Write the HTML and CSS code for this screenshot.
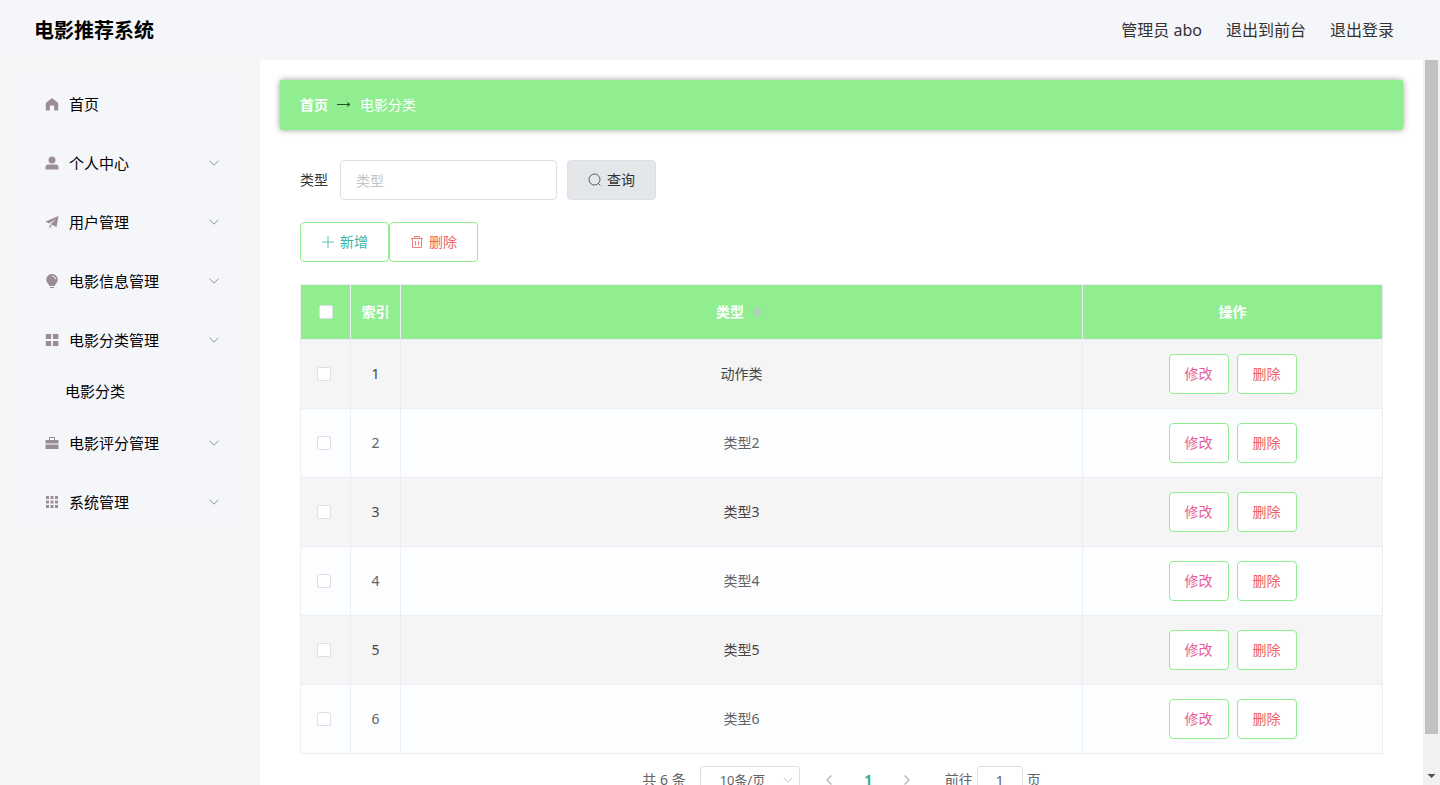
FILE: index.html
```
<!DOCTYPE html>
<html lang="zh-CN">
<head>
<meta charset="utf-8">
<title>电影推荐系统</title>
<link rel="stylesheet" href="styles.css">
</head>
<body>
<svg class="defs" aria-hidden="true">
  <symbol id="down" viewBox="0 0 12 12"><path d="M1.500 3.700 6 8.200l4.500-4.500" fill="none" stroke="currentColor"/></symbol>
  <symbol id="left" viewBox="0 0 12 12"><path d="M8.500 1.500 4 6l4.500 4.500" fill="none" stroke="currentColor" stroke-width="1.400"/></symbol>
  <symbol id="right" viewBox="0 0 12 12"><path d="M3.500 1.500 8 6l-4.500 4.500" fill="none" stroke="currentColor" stroke-width="1.400"/></symbol>
</svg>
<header class="header">
  <h1 class="title">电影推荐系统</h1>
  <nav class="user-nav">
    <span>管理员 abo</span>
    <a href="#">退出到前台</a>
    <a href="#">退出登录</a>
  </nav>
</header>
<div class="body">
  <aside class="sidebar">
    <nav class="menu">
      <a class="item home" href="#"><svg class="icon" viewBox="0 0 14 14"><path d="M7 1 .800 6v7.500h4V9.500q0-1 1-1h2.400q1 0 1 1v4h4V6z"/></svg><span>首页</span></a>
      <button class="item"><svg class="icon" viewBox="0 0 14 14"><circle cx="7" cy="4" r="3.500"/><path d="M.5 13.500v-2q0-3 3-3h7q3 0 3 3v2z"/></svg><span>个人中心</span><svg class="arrow"><use href="#down"/></svg></button>
      <button class="item"><svg class="icon" viewBox="0 0 14 14"><path d="M13.500 1 .5 6.500l3.500 2L11 4 5.500 9.300 11.500 12zM4.500 9.800v3.700l2.300-2.400z"/></svg><span>用户管理</span><svg class="arrow"><use href="#down"/></svg></button>
      <button class="item"><svg class="icon" viewBox="0 0 14 14"><path d="M7 0a5.700 5.700 0 0 0-3.500 10.200L4.500 12h5l1-1.800A5.700 5.700 0 0 0 7 0zM5 13h4v1H5z"/><path d="M7.500 2.200q2.800.4 3.200 3" fill="none" stroke="#f4f6fa"/></svg><span>电影信息管理</span><svg class="arrow"><use href="#down"/></svg></button>
      <button class="item"><svg class="icon" viewBox="0 0 14 14"><path d="M.8 1h5.400v5H.8zM8 1h5.400v5H8zM.8 8h5.400v5H.8zM8 8h5.400v5H8z"/></svg><span>电影分类管理</span><svg class="arrow"><use href="#down"/></svg></button>
      <a class="item sub" href="#">电影分类</a>
      <button class="item"><svg class="icon" viewBox="0 0 14 14"><path d="M4 4V1h6v3h3.500v3.500H.500V4zm1 0h4V2H5zM.500 8.500h13V13H.500z"/></svg><span>电影评分管理</span><svg class="arrow"><use href="#down"/></svg></button>
      <button class="item"><svg class="icon" viewBox="0 0 14 14"><path d="M1 1h3v3H1zM5.500 1h3v3h-3zM10 1h3v3h-3zM1 5.500h3v3H1zM5.500 5.500h3v3h-3zM10 5.500h3v3h-3zM1 10h3v3H1zM5.500 10h3v3h-3zM10 10h3v3h-3z"/></svg><span>系统管理</span><svg class="arrow"><use href="#down"/></svg></button>
    </nav>
  </aside>
  <main class="main">
    <nav class="crumbs">
      <a class="crumb-home" href="#">首页</a>
      <svg class="crumb-arrow" viewBox="0 0 14 14"><path d="M0 6.500h13M10 4.500 13 6.500 10 8.500" fill="none" stroke="#25512f"/></svg>
      <span>电影分类</span>
    </nav>
    <div class="content">
      <form class="search">
        <label for="kind">类型</label>
        <input class="text-input" id="kind" type="text" placeholder="类型">
        <button class="btn query" type="button"><svg class="btn-icon" viewBox="0 0 14 14"><circle cx="6.500" cy="6.500" r="5.500"/><path d="m10.500 10.500 2 2"/></svg>查询</button>
      </form>
      <div class="actions">
        <button class="btn add"><svg class="btn-icon" viewBox="0 0 14 14"><path d="M7 1v12M1 7h12"/></svg>新增</button>
        <button class="btn remove"><svg class="btn-icon" viewBox="0 0 14 14"><path d="M1 3.500h12M4.500 3V1.500h5V3M2.500 3.500v9h9v-9M5.500 6v4.500M8.500 6v4.500"/></svg>删除</button>
      </div>
      <table class="table">
        <colgroup><col class="c-check"><col class="c-index"><col><col class="c-ops"></colgroup>
        <thead>
          <tr><th><input class="check" type="checkbox" aria-label="全选"></th><th>索引</th><th><span class="sortable">类型<svg class="sort" viewBox="0 0 16 14"><path d="M2 6 6 2l4 4zM2 8h8l-4 4z"/><path d="M0 7h15" fill="none" stroke="#c0c4cc" stroke-opacity=".5"/></svg></span></th><th>操作</th></tr>
        </thead>
        <tbody>
          <tr><td><input class="check" type="checkbox" aria-label="选择 1"></td><td>1</td><td>动作类</td><td><div class="ops"><button class="btn edit">修改</button><button class="btn remove">删除</button></div></td></tr>
          <tr><td><input class="check" type="checkbox" aria-label="选择 2"></td><td>2</td><td>类型2</td><td><div class="ops"><button class="btn edit">修改</button><button class="btn remove">删除</button></div></td></tr>
          <tr><td><input class="check" type="checkbox" aria-label="选择 3"></td><td>3</td><td>类型3</td><td><div class="ops"><button class="btn edit">修改</button><button class="btn remove">删除</button></div></td></tr>
          <tr><td><input class="check" type="checkbox" aria-label="选择 4"></td><td>4</td><td>类型4</td><td><div class="ops"><button class="btn edit">修改</button><button class="btn remove">删除</button></div></td></tr>
          <tr><td><input class="check" type="checkbox" aria-label="选择 5"></td><td>5</td><td>类型5</td><td><div class="ops"><button class="btn edit">修改</button><button class="btn remove">删除</button></div></td></tr>
          <tr><td><input class="check" type="checkbox" aria-label="选择 6"></td><td>6</td><td>类型6</td><td><div class="ops"><button class="btn edit">修改</button><button class="btn remove">删除</button></div></td></tr>
        </tbody>
      </table>
      <div class="pager">
        <span>共 6 条</span>
        <span class="size"><select class="size-select" aria-label="每页条数"><option>10条/页</option></select><svg class="size-arrow"><use href="#down"/></svg></span>
        <div class="pages">
          <button class="page" aria-label="上一页"><svg class="page-icon"><use href="#left"/></svg></button>
          <button class="page current">1</button>
          <button class="page" aria-label="下一页"><svg class="page-icon"><use href="#right"/></svg></button>
        </div>
        <label class="jump">前往<input class="jump-input" type="text" value="1">页</label>
      </div>
    </div>
  </main>
  <div class="scrollbar" aria-hidden="true">
    <div class="thumb"></div>
    <svg class="scroll-down" viewBox="0 0 17 17"><path d="M4.500 6h8l-4 4z"/></svg>
  </div>
</div>
</body>
</html>
```
FILE: styles.css
```
* { box-sizing: border-box; }
body {
  margin: 0;
  height: 100vh;
  display: flex;
  flex-direction: column;
  overflow: hidden;
  background: #fff;
  color: #333;
  font: 14px/20px "Noto Sans", "Noto Sans CJK SC", sans-serif;
}
a { color: inherit; text-decoration: none; }
button, input, select { font: inherit; color: inherit; margin: 0; }
button { cursor: pointer; }
.defs { display: none; }

.header {
  flex: none;
  height: 60px;
  display: flex;
  align-items: center;
  justify-content: space-between;
  padding: 0 46px 0 34px;
  background: #f4f6fa;
}
.title { margin: 0; padding-top: 2px; font-size: 20px; line-height: 28px; color: #000; }
.user-nav { display: flex; gap: 24px; font-size: 16px; line-height: 24px; }

.body { flex: 1; min-height: 0; display: flex; }
.sidebar { flex: none; width: 260px; padding: 12px 20px; background: #f5f5f5; }
.menu {
  display: flex;
  flex-direction: column;
  padding: 2px 0 1px;
  margin-right: 7px;
  background: #f4f6fa;
}
.item {
  display: flex;
  align-items: center;
  gap: 10px;
  height: 59px;
  padding: 0 13px 0 25px;
  border: 0;
  background: #f4f6fa;
  color: #000;
  font-size: 15px;
  text-align: left;
}
.item.home { margin-right: -7px; }
.item.sub { height: 44px; padding-left: 45px; }
.icon { width: 14px; height: 14px; fill: #9b8d98; }
.arrow { width: 12px; height: 12px; margin-left: auto; color: #909399; }

.main { flex: 1; min-width: 0; padding: 20px; overflow: hidden; }
.crumbs {
  display: flex;
  align-items: center;
  gap: 9px;
  height: 50px;
  padding: 0 20px;
  background: #90ee90;
  color: #fff;
  border-radius: 2px;
  box-shadow: 0 0 6px rgba(0, 0, 0, .4);
}
.crumb-home { font-weight: 700; }
.crumb-arrow { width: 14px; height: 14px; }
.content { padding: 30px 20px 0; }

.search { display: flex; align-items: center; }
.text-input {
  width: 217px;
  height: 40px;
  margin: 0 10px 0 12px;
  padding: 0 15px;
  border: 1px solid #dcdfe6;
  border-radius: 4px;
  background: #fff;
}
.text-input::placeholder { color: #c0c4cc; }
.btn {
  display: flex;
  align-items: center;
  justify-content: center;
  gap: 5px;
  height: 40px;
  padding: 0 20px;
  border: 1px solid #90ee90;
  border-radius: 4px;
  background: #fff;
}
.btn-icon { width: 14px; height: 14px; fill: none; stroke: currentColor; stroke-width: .8; }
.query { border-color: #dcdfe6; background: #e3e7ea; }
.add { color: #37b5a5; }
.edit { color: #e85c9b; }
.remove { color: #ee5f5f; }
.actions { display: flex; margin: 22px 0; }

.table {
  width: 100%;
  table-layout: fixed;
  border-collapse: collapse;
  text-align: center;
  color: #606266;
}
.c-check, .c-index { width: 50px; }
.c-ops { width: 300px; }
.table th, .table td { padding: 0; border: 1px solid #ebeef5; }
.table th { height: 55px; background: #90ee90; color: #fff; }
.table td { height: 69px; }
.table tbody tr { background: #fcfdff; }
.table tbody tr:nth-child(odd) { background: #f5f5f5; color: #444; }
.sortable { display: inline-flex; align-items: center; gap: 7px; }
.sort { width: 16px; height: 14px; fill: #c0c4cc; }
.check {
  appearance: none;
  display: block;
  width: 14px;
  height: 14px;
  margin: 0 16px;
  border: 1px solid #dcdfe6;
  border-radius: 2px;
  background: #fff;
}
th .check { margin-left: 18px; }
.ops { display: flex; justify-content: center; gap: 8px; }
.ops .btn { width: 60px; padding: 0; }

.pager {
  display: flex;
  align-items: center;
  justify-content: center;
  margin-top: 12px;
  color: #606266;
}
.size { position: relative; margin: 0 10px 0 14px; }
.size-select {
  appearance: none;
  display: block;
  width: 100px;
  height: 28px;
  padding: 0 19px;
  border: 1px solid #dcdfe6;
  border-radius: 3px;
  background: #fff;
  font-size: 13px;
}
.size-arrow { position: absolute; right: 6px; top: 8px; width: 12px; height: 12px; color: #c0c4cc; }
.pages { display: flex; }
.page {
  display: grid;
  place-items: center;
  width: 39px;
  height: 28px;
  padding: 0;
  border: 0;
  background: none;
  color: #b4b7bd;
}
.page-icon { width: 12px; height: 12px; }
.current { color: #2eb08c; font-weight: 700; }
.jump { display: flex; align-items: center; gap: 4px; margin-left: 18px; }
.jump-input {
  width: 46px;
  height: 28px;
  padding: 0;
  border: 1px solid #dcdfe6;
  border-radius: 3px;
  background: #fff;
  text-align: center;
}

.scrollbar {
  flex: none;
  width: 17px;
  display: flex;
  flex-direction: column;
  justify-content: space-between;
  background: #f1f1f1;
}
.thumb { height: 93%; margin: 0 2px; background: #c1c1c1; }
.scroll-down { width: 17px; height: 17px; fill: #505050; }
```
